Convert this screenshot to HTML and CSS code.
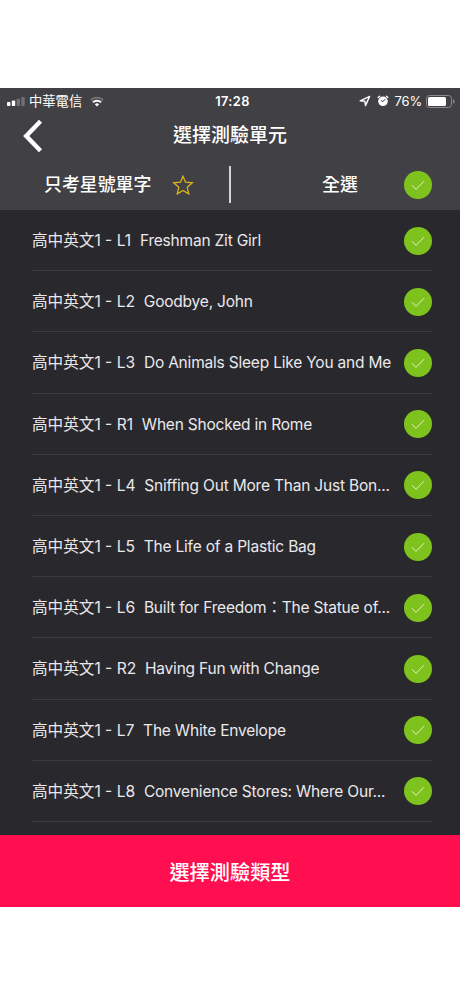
FILE: index.html
```html
<!DOCTYPE html>
<html lang="zh-Hant">
<head>
    <meta charset="UTF-8">
    <meta name="viewport" content="width=device-width, initial-scale=1.0">
    <title>選擇測驗單元</title>
    <link rel="stylesheet" href="styles.css">
</head>
<body>
    <svg class="defs" width="0" height="0">
        <symbol id="check" viewBox="0 0 28 28">
            <circle cx="14" cy="14" r="14" fill="#7ec31d"/>
            <path d="M8 14.2l4 4.2 8-8.2" fill="none" stroke="#e2f2c4" stroke-width="1"/>
        </symbol>
    </svg>

    <div class="screen">
        <header class="header">
            <div class="status">
                <div class="status-left">
                    <svg width="18" height="9" viewBox="0 0 18 9">
                        <rect x="0" y="5" width="3.4" height="4" rx="0.8" fill="#fff"/>
                        <rect x="4.8" y="3.4" width="3.4" height="5.6" rx="0.8" fill="#fff"/>
                        <rect x="9.6" y="1.7" width="3.4" height="7.3" rx="0.8" fill="#707074"/>
                        <rect x="14.3" y="0" width="3.4" height="9" rx="0.8" fill="#707074"/>
                    </svg>
                    <span class="carrier">中華電信</span>
                    <svg class="wifi" width="14" height="11" viewBox="0 0 14 11" fill="none">
                        <path d="M0.8 4.2a8.8 8.8 0 0 1 12.4 0" stroke="#77777b" stroke-width="1.8"/>
                        <path d="M2.9 6.4a5.8 5.8 0 0 1 8.2 0" stroke="#fff" stroke-width="2"/>
                        <path d="M4.8 8.3a3.2 3.2 0 0 1 4.4 0L7 10.5z" fill="#fff"/>
                    </svg>
                </div>
                <span class="time">17:28</span>
                <div class="status-right">
                    <svg width="12" height="12" viewBox="0 0 12 12">
                        <path d="M1.2 5.9L10.6 1.4 6.5 10.6 5.9 6.3z" fill="none" stroke="#fff" stroke-width="1.4" stroke-linejoin="round"/>
                    </svg>
                    <svg class="alarm" width="12" height="12" viewBox="0 0 12 12">
                        <circle cx="6" cy="6.3" r="4.8" fill="#fff"/>
                        <path d="M1.2 2.6L2.6 1.3M10.8 2.6L9.4 1.3" stroke="#fff" stroke-width="1.4" stroke-linecap="round"/>
                        <path d="M8 4.2L6 6.6 4 5.6" fill="none" stroke="#414044" stroke-width="1"/>
                    </svg>
                    <span class="percent">76%</span>
                    <svg width="29" height="13" viewBox="0 0 29 13">
                        <rect x="0.5" y="0.5" width="25" height="12" rx="3" fill="none" stroke="#8b8b8f"/>
                        <rect x="2" y="2" width="18" height="9" rx="1.5" fill="#fff"/>
                        <path d="M27 4.2q1.6 0.5 1.6 2.3T27 8.8z" fill="#8b8b8f"/>
                    </svg>
                </div>
            </div>
            <div class="nav">
                <svg class="back" width="20" height="34" viewBox="0 0 20 34">
                    <path d="M17.5 2.2L3.2 17l14.3 14.8" fill="none" stroke="#fff" stroke-width="4.4"/>
                </svg>
                <h1>選擇測驗單元</h1>
            </div>
            <div class="filters">
                <div class="filter starred">
                    <span>只考星號單字</span>
                    <svg width="22" height="20" viewBox="0 0 22 20">
                        <path d="M11 1.2l2.5 6 6.8 0.6-5.1 4.5 1.5 6.6L11 15.5l-5.7 3.4 1.5-6.6L1.7 7.8l6.8-0.6z" fill="none" stroke="#dcb41c" stroke-width="1.3"/>
                    </svg>
                </div>
                <div class="filter all">
                    <span>全選</span>
                    <svg class="check"><use href="#check"/></svg>
                </div>
            </div>
        </header>

        <ul class="units">
            <li><span class="unit">高中英文1 - L1&nbsp; <span class="name">Freshman Zit Girl</span></span><svg class="check"><use href="#check"/></svg></li>
            <li><span class="unit">高中英文1 - L2&nbsp; <span class="name">Goodbye, John</span></span><svg class="check"><use href="#check"/></svg></li>
            <li><span class="unit">高中英文1 - L3&nbsp; <span class="name">Do Animals Sleep Like You and Me</span></span><svg class="check"><use href="#check"/></svg></li>
            <li><span class="unit">高中英文1 - R1&nbsp; <span class="name">When Shocked in Rome</span></span><svg class="check"><use href="#check"/></svg></li>
            <li><span class="unit">高中英文1 - L4&nbsp; <span class="name">Sniffing Out More Than Just Bon...</span></span><svg class="check"><use href="#check"/></svg></li>
            <li><span class="unit">高中英文1 - L5&nbsp; <span class="name">The Life of a Plastic Bag</span></span><svg class="check"><use href="#check"/></svg></li>
            <li><span class="unit">高中英文1 - L6&nbsp; <span class="name">Built for Freedom：The Statue of...</span></span><svg class="check"><use href="#check"/></svg></li>
            <li><span class="unit">高中英文1 - R2&nbsp; <span class="name">Having Fun with Change</span></span><svg class="check"><use href="#check"/></svg></li>
            <li><span class="unit">高中英文1 - L7&nbsp; <span class="name">The White Envelope</span></span><svg class="check"><use href="#check"/></svg></li>
            <li><span class="unit">高中英文1 - L8&nbsp; <span class="name">Convenience Stores: Where Our...</span></span><svg class="check"><use href="#check"/></svg></li>
        </ul>

        <button class="submit">選擇測驗類型</button>
    </div>
</body>
</html>
```

FILE: styles.css
```css
* { box-sizing: border-box; }
body { margin: 0; padding-top: 88px; background: #fff; font-family: Inter, "Noto Sans CJK TC", sans-serif; color: #fff; }
svg { display: block; flex: none; }
.defs { display: none; }
.screen { height: 819px; display: flex; flex-direction: column; background: #29282d; overflow: hidden; }

.header { height: 122px; flex: none; background: #414044; }
.status { height: 24px; padding: 1px 5px 0 7px; display: grid; grid-template-columns: 1fr auto 1fr; align-items: center; font-size: 13px; line-height: 23px; }
.status-left, .status-right { display: flex; align-items: center; }
.status-right { justify-content: flex-end; }
.carrier { margin-left: 4px; font-size: 13.3px; }
.wifi { margin-left: 8px; }
.time { padding: 1px 0 0 3px; font-weight: 600; font-size: 12.8px; letter-spacing: 0.4px; }
.alarm { margin-left: 6px; }
.percent { margin: 0 4px 0 6px; letter-spacing: -0.2px; }

.nav { height: 47px; padding-left: 23px; display: grid; grid-template-columns: 20px 1fr 43px; align-items: center; }
.nav h1 { margin: 0; padding-top: 1px; font-size: 19px; font-weight: 500; line-height: 46px; text-align: center; }

.filters { height: 51px; display: flex; align-items: center; font-size: 17.9px; font-weight: 500; line-height: 50px; }
.filter { display: flex; align-items: center; }
.filter span { padding-top: 1px; }
.starred { width: 231px; height: 37px; padding-left: 44px; gap: 21px; border-right: 2px solid #d5d5d7; }
.all { flex: 1; justify-content: space-between; padding: 0 28px 0 91px; }
.check { width: 28px; height: 28px; }

.units { flex: 1; margin: 0; padding: 0 28px 0 32px; list-style: none; }
.units li { height: 61.2px; padding-top: 1px; display: flex; align-items: center; justify-content: space-between; border-bottom: 1px solid #3c3b40; }
.unit { padding-top: 1px; font-size: 15.6px; line-height: 24px; white-space: nowrap; color: #e9e9ec; }
.name { font-size: 15.5px; letter-spacing: -0.2px; }

.submit { height: 72px; flex: none; border: 0; background: #ff0f50; color: #fff; font-family: inherit; font-size: 20.2px; font-weight: 500; }
```
